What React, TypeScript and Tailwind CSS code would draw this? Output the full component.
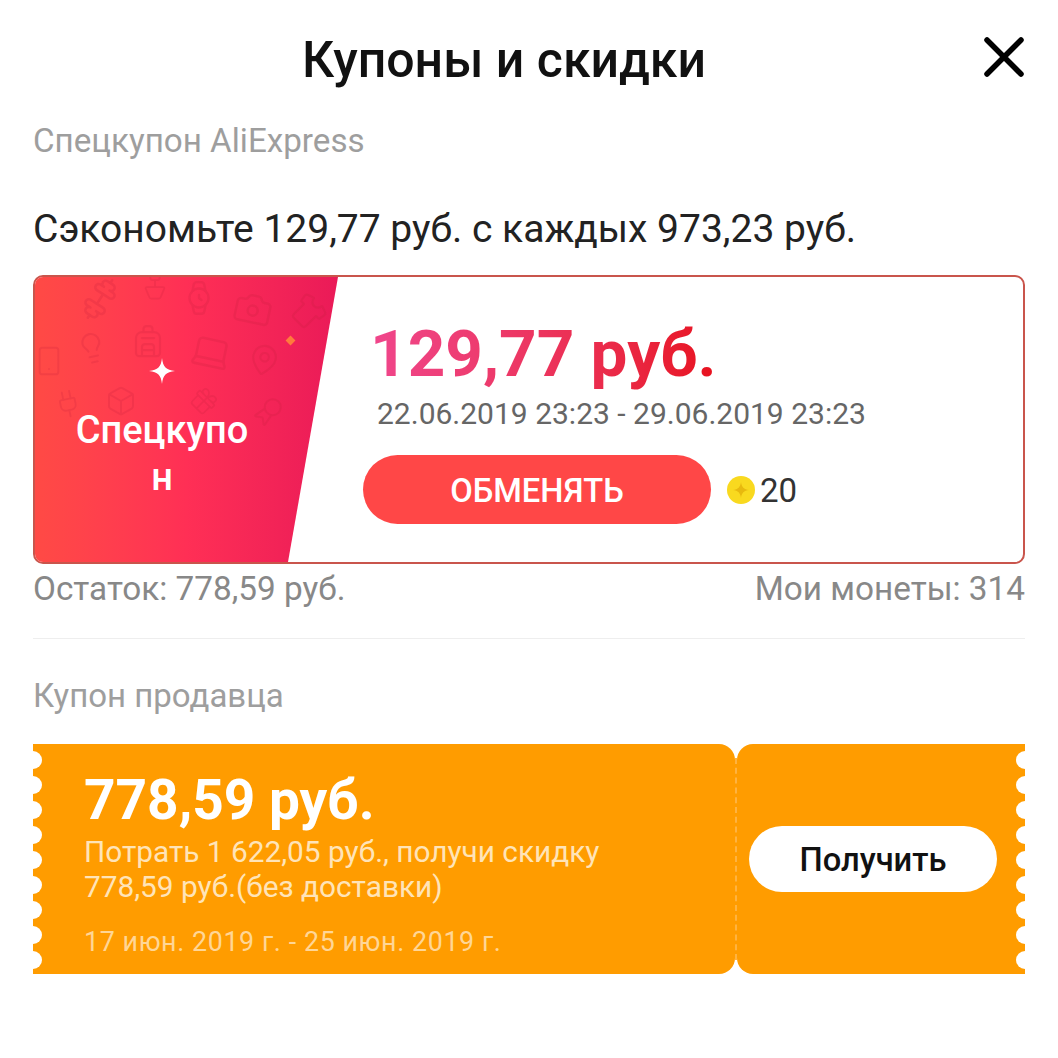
import { Watch, Camera, Lightbulb, Laptop, Shirt, Dumbbell, Gift, Smartphone, MapPin, Plug, Award, Backpack, Box, Lamp } from 'lucide-react';

const doodles = [
  { Icon: Dumbbell, cls: 'left-[45px] top-[2px] w-[40px] h-[40px] -rotate-12' },
  { Icon: Lamp, cls: 'left-[106px] top-[-4px] w-[28px] h-[28px] rotate-180' },
  { Icon: Watch, cls: 'left-[145px] top-[2px] w-[38px] h-[38px]' },
  { Icon: Camera, cls: 'left-[198px] top-[12px] w-[40px] h-[40px] rotate-12' },
  { Icon: Shirt, cls: 'left-[256px] top-[18px] w-[34px] h-[34px] rotate-45' },
  { Icon: Lightbulb, cls: 'left-[40px] top-[54px] w-[34px] h-[34px] -rotate-12' },
  { Icon: Backpack, cls: 'left-[95px] top-[46px] w-[36px] h-[36px]' },
  { Icon: Laptop, cls: 'left-[155px] top-[54px] w-[42px] h-[42px] rotate-12' },
  { Icon: MapPin, cls: 'left-[212px] top-[66px] w-[34px] h-[34px] rotate-12' },
  { Icon: Smartphone, cls: 'left-[-2px] top-[68px] w-[32px] h-[32px]' },
  { Icon: Plug, cls: 'left-[18px] top-[112px] w-[30px] h-[30px] -rotate-12' },
  { Icon: Box, cls: 'left-[70px] top-[108px] w-[32px] h-[32px]' },
  { Icon: Gift, cls: 'left-[155px] top-[110px] w-[28px] h-[28px] rotate-45' },
  { Icon: Award, cls: 'left-[218px] top-[118px] w-[32px] h-[32px] rotate-45' },
];

const scallops = [0, 1, 2, 3, 4, 5, 6, 7, 8];

function Scallops({ side }: { side: 'left' | 'right' }) {
  return (
    <div className={side === 'left' ? 'absolute left-[-9px] top-[7px] flex flex-col gap-[7px]' : 'absolute right-[-9px] top-[7px] flex flex-col gap-[7px]'}>
      {scallops.map((i) => (
        <div key={i} className="w-[18px] h-[18px] rounded-full bg-white" />
      ))}
    </div>
  );
}

export default function App() {
  return (
    <div className="w-[1058px] h-[1058px] bg-white overflow-hidden font-['Roboto',sans-serif] px-[33px]">
      <div className="relative h-[120px] flex items-center justify-center pr-[50px]">
        <h1 className="text-[50px] font-medium text-[#111] leading-none">Купоны и скидки</h1>
        <svg className="absolute right-[-3px] top-[33px] w-[48px] h-[48px]" viewBox="0 0 48 48" fill="none" stroke="#000" strokeWidth="5.5" strokeLinecap="round">
          <path d="M7 7 L41 41 M41 7 L7 41" />
        </svg>
      </div>

      <div className="text-[33.2px] leading-[42px] text-[#9e9e9e]">Спецкупон AliExpress</div>

      <div className="mt-[46px] text-[39px] leading-[42px] text-[#222]">Сэкономьте 129,77 руб. с каждых 973,23 руб.</div>

      <div className="mt-[25px] relative h-[289px] w-[992px] rounded-[10px] border-2 border-[#c9554c] overflow-hidden flex">
        <div className="absolute left-0 top-0 h-full w-[303px] bg-gradient-to-r from-[#ff4a45] via-[#ff2f55] to-[#ea1a58] [clip-path:polygon(0_0,100%_0,83.5%_100%,0_100%)] overflow-hidden">
          {doodles.map(({ Icon, cls }, i) => (
            <Icon key={i} className={'absolute text-[#c41f3c] opacity-20 ' + cls} strokeWidth={1.5} />
          ))}
          <div className="absolute left-[252px] top-[60px] w-[7px] h-[7px] rotate-45 bg-[#ff7a3c]" />
          <svg className="absolute left-[114px] top-[81px] w-[26px] h-[26px]" viewBox="0 0 26 26" fill="#fff">
            <path d="M13 0 C14 9 17 12 26 13 C17 14 14 17 13 26 C12 17 9 14 0 13 C9 12 12 9 13 0 Z" />
          </svg>
          <div className="absolute left-[32px] top-[130px] w-[190px] text-center text-[38px] leading-[47px] font-medium text-white break-all">Спецкупон</div>
        </div>

        <div className="ml-[328px] flex flex-col items-start">
          <div className="mt-[38px] ml-[7px] text-[65.6px] leading-[78px] font-bold bg-gradient-to-r from-[#f0468c] to-[#e8101c] bg-clip-text text-transparent">129,77 руб.</div>
          <div className="mt-[3px] ml-[14px] text-[30px] leading-[36px] text-[#666]">22.06.2019 23:23 - 29.06.2019 23:23</div>
          <div className="mt-[23px] flex items-center">
            <button className="w-[348px] h-[69px] pt-[4px] rounded-full bg-[#ff4747] text-white text-[32.7px] font-medium">ОБМЕНЯТЬ</button>
            <div className="ml-[16px] w-[28px] h-[28px] rounded-full bg-[#f9d91f] flex items-center justify-center">
              <svg className="w-[18px] h-[18px]" viewBox="0 0 18 18" fill="#e8b90e">
                <path d="M9 1 C9.5 6 12 8.5 17 9 C12 9.5 9.5 12 9 17 C8.5 12 6 9.5 1 9 C6 8.5 8.5 6 9 1 Z" />
              </svg>
            </div>
            <span className="ml-[5px] pt-[2px] text-[33px] text-[#333]">20</span>
          </div>
        </div>
      </div>

      <div className="w-[992px] mt-[5px] flex justify-between text-[33.3px] leading-[40px] text-[#888]">
        <span>Остаток: 778,59 руб.</span>
        <span>Мои монеты: 314</span>
      </div>

      <div className="w-[992px] mt-[29px] h-[1px] bg-[#eeeeee]" />

      <div className="mt-[36px] text-[33px] leading-[42px] text-[#9e9e9e]">Купон продавца</div>

      <div className="mt-[27px] relative w-[992px] h-[230px] flex overflow-hidden">
        <div className="w-[702px] bg-[#ff9c00] rounded-r-[16px] pl-[51px] pt-[24px] text-white">
          <div className="text-[55px] leading-[64px] font-bold">778,59 руб.</div>
          <div className="mt-[2px] w-[540px] text-[29.8px] leading-[35px] text-[#ffe4b8]">Потрать 1 622,05 руб., получи скидку 778,59 руб.(без доставки)</div>
          <div className="mt-[22px] text-[26.8px] leading-[32px] tracking-[0.6px] text-[#ffd696]">17 июн. 2019 г. - 25 июн. 2019 г.</div>
        </div>
        <div className="w-[2px] my-[14px] bg-[#ff9c00] border-l-2 border-dashed border-[#ffb340]" />
        <div className="flex-1 bg-[#ff9c00] rounded-l-[16px] flex items-center pl-[12px]">
          <button className="w-[248px] h-[66px] pt-[4px] rounded-full bg-white text-[32.7px] font-medium text-[#111]">Получить</button>
        </div>
        <Scallops side="left" />
        <Scallops side="right" />
      </div>
    </div>
  );
}
